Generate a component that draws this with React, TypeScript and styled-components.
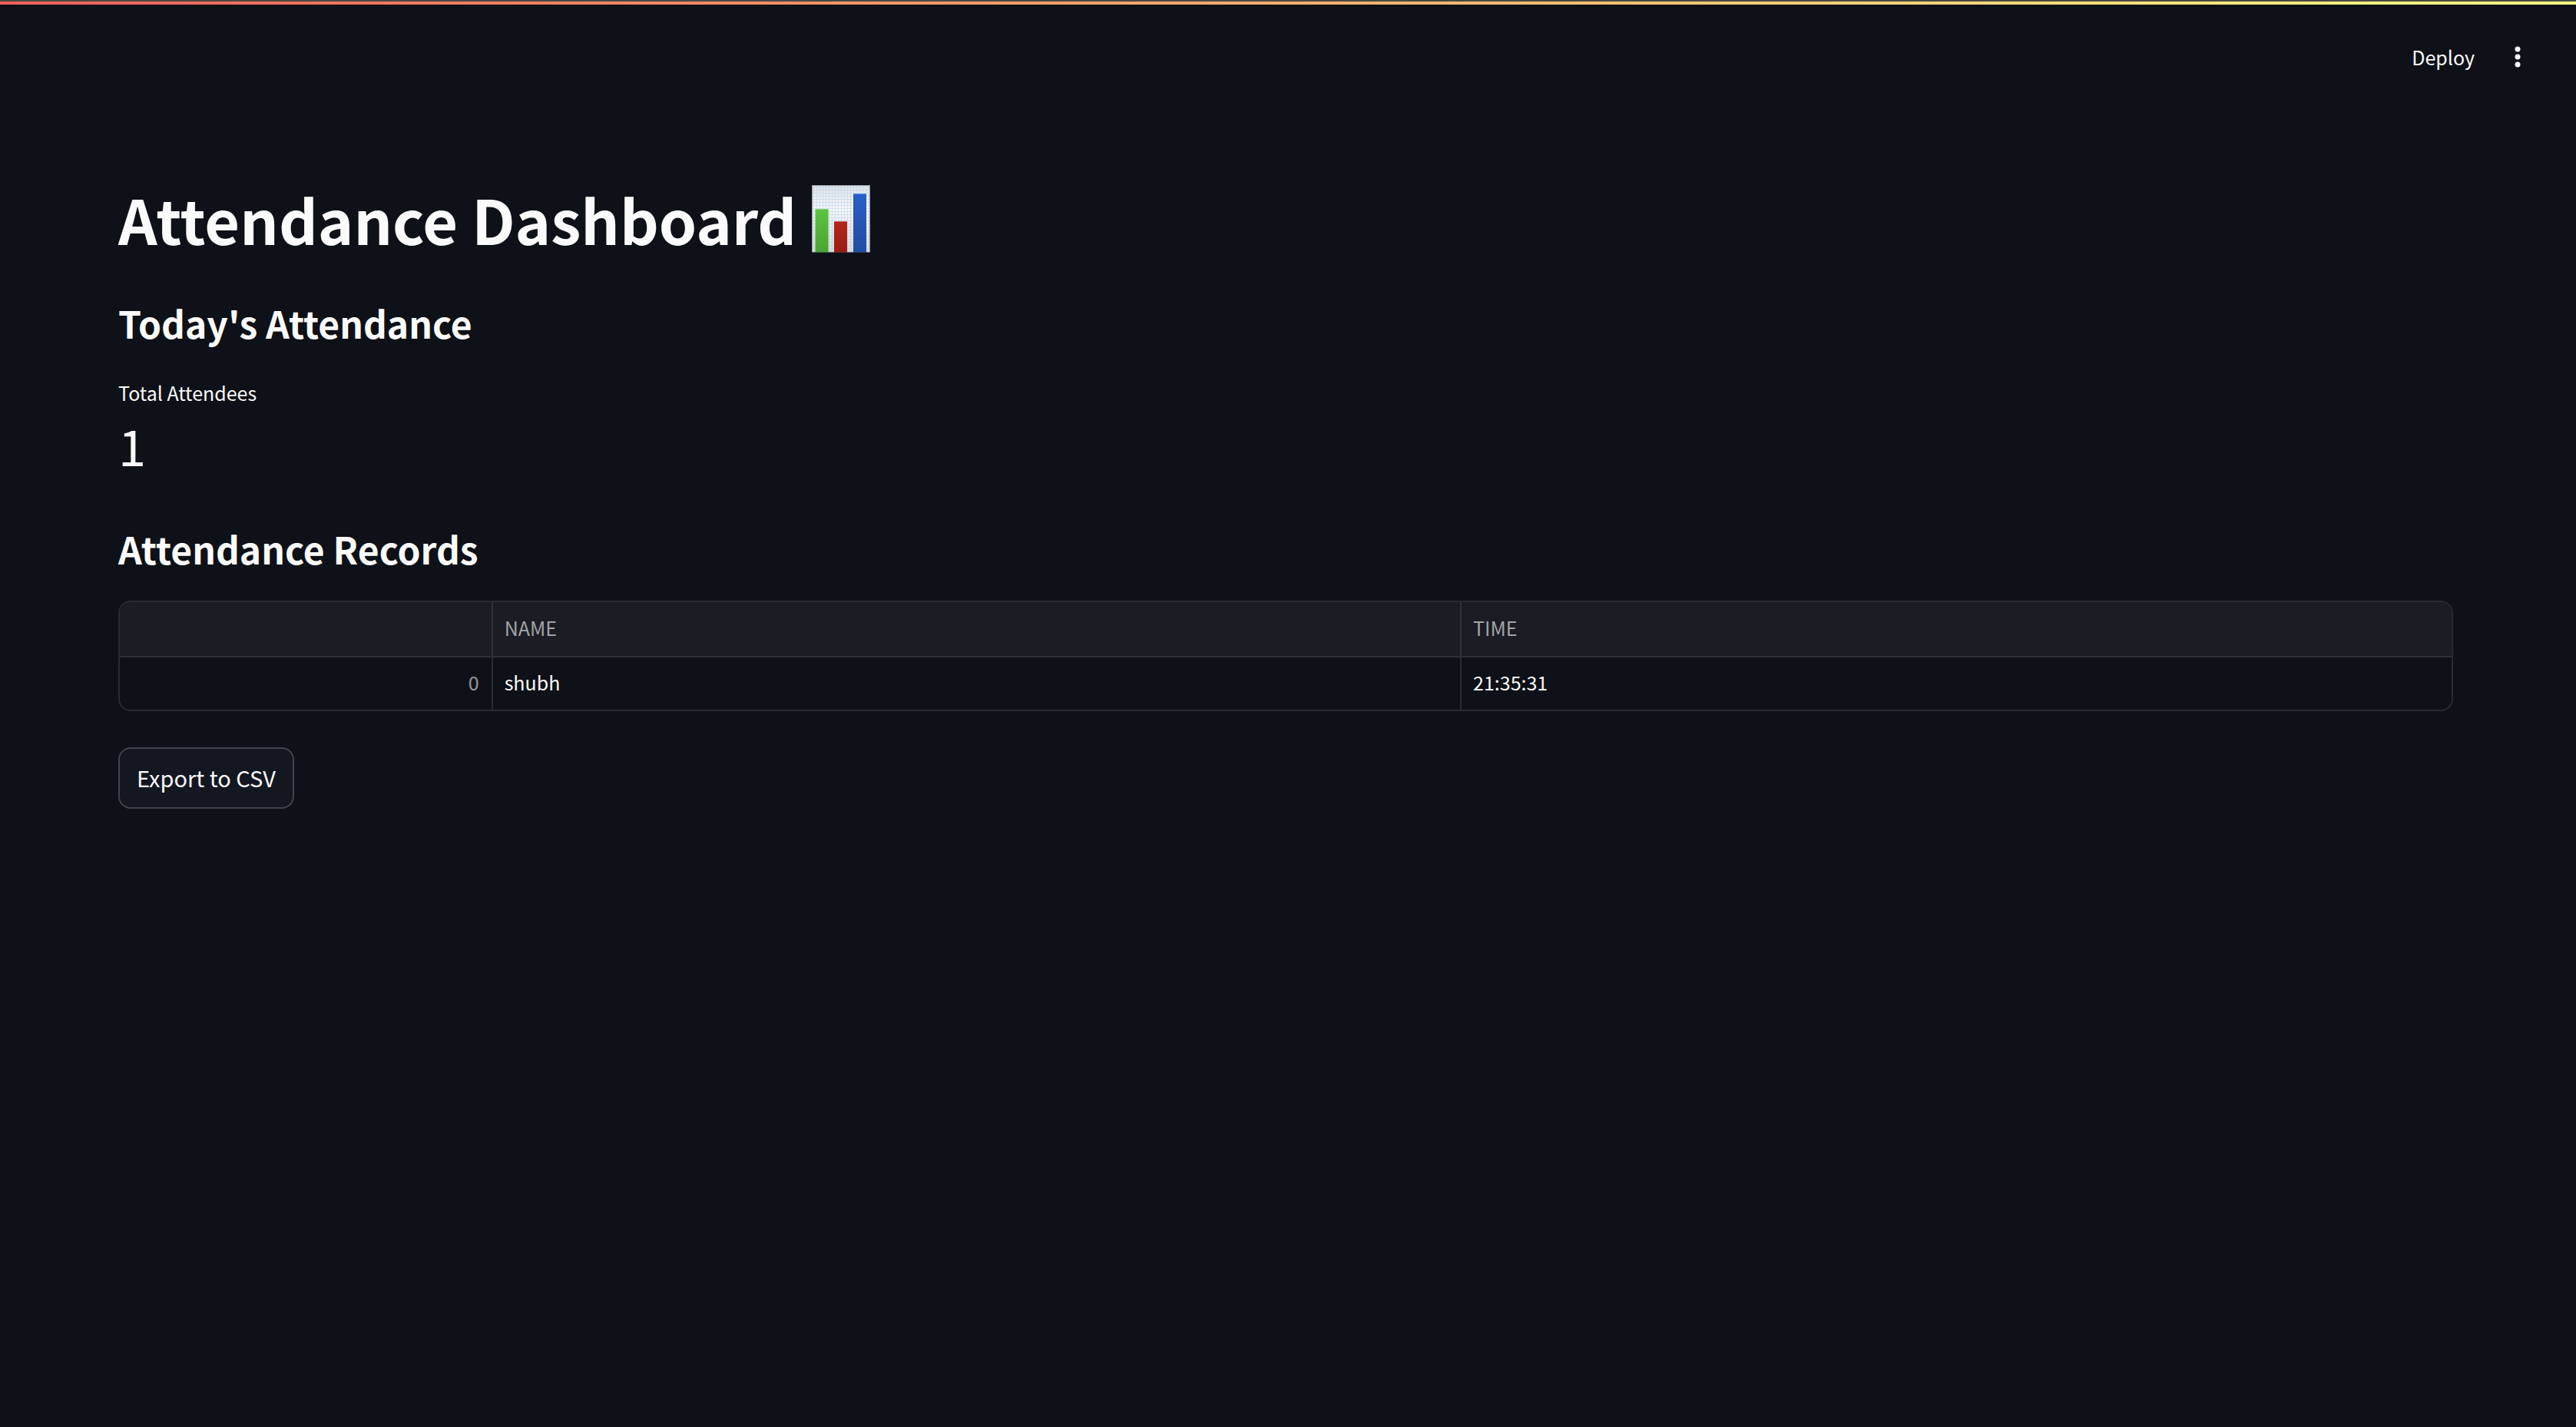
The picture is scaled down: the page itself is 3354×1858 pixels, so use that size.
import React from "react";
import styled, { createGlobalStyle } from "styled-components";

const GlobalStyle = createGlobalStyle`
  *, *::before, *::after { box-sizing: border-box; }
  body {
    margin: 0;
    background: #0e1117;
    color: #fafafa;
    font-family: "Noto Sans CJK SC", "Noto Sans", sans-serif;
    font-size: 25px;
    line-height: 40px;
  }
`;

const Page = styled.div`
  display: flex;
  flex-direction: column;
  min-height: 100vh;
`;

const Decoration = styled.div`
  height: 6px;
  border-top: 2px solid #4a4a43;
  background: linear-gradient(90deg, #f0605a, #fffd84);
`;

const Toolbar = styled.header`
  display: flex;
  justify-content: flex-end;
  align-items: center;
  gap: 34px;
  height: 136px;
  padding: 0 56px 0 0;
`;

const ToolbarButton = styled.button`
  display: flex;
  align-items: center;
  padding: 0 2px;
  border: 0;
  background: transparent;
  color: inherit;
  font: inherit;
  cursor: pointer;
`;

const Main = styled.main`
  display: flex;
  flex-direction: column;
  align-items: stretch;
  padding: 90px 160px 160px 154px;
`;

const Title = styled.h1`
  display: flex;
  align-items: center;
  gap: 20px;
  margin: 0 0 48px;
  font-size: 79px;
  line-height: 106px;
  font-weight: 700;
`;

const ChartIcon = styled.svg`
  display: block;
  width: 76px;
  height: 88px;
`;

const Subtitle = styled.h2`
  margin: 0;
  font-size: 48px;
  line-height: 68px;
  font-weight: 600;
`;

const Metric = styled.dl`
  margin: 37px 0 53px;
`;

const MetricLabel = styled.dt`
  line-height: 40px;
`;

const MetricValue = styled.dd`
  margin: 0;
  font-size: 65px;
  line-height: 96px;
`;

const TableFrame = styled.div`
  margin: 34px 0 47px;
  border: 2px solid #292b30;
  border-radius: 16px;
  overflow: hidden;
`;

const Table = styled.table`
  width: 100%;
  table-layout: fixed;
  border-collapse: separate;
  border-spacing: 0;
`;

const Col = styled.col<{ $share?: string }>`
  width: ${(p) => p.$share ?? "auto"};
`;

const HeadCell = styled.th`
  height: 72px;
  padding: 0 16px 4px 15px;
  border-bottom: 2px solid #313236;
  background: #1b1c24;
  color: #a3a4a7;
  font-weight: 400;
  text-align: left;

  & + & { border-left: 2px solid #313236; }
`;

const Cell = styled.td<{ $index?: boolean }>`
  height: 68px;
  padding: 0 16px 5px 15px;
  color: ${(p) => (p.$index ? "#96989b" : "inherit")};
  text-align: ${(p) => (p.$index ? "right" : "left")};

  & + & { border-left: 2px solid #292b30; }
`;

const ExportButton = styled.button`
  align-self: flex-start;
  height: 80px;
  padding: 0 22px 3px;
  border: 2px solid #41444c;
  border-radius: 16px;
  background: #131720;
  color: inherit;
  font-family: inherit;
  font-size: 29px;
  line-height: 40px;
  cursor: pointer;
`;

const records = [{ name: "shubh", time: "21:35:31" }];

function BarChart() {
  return (
    <ChartIcon viewBox="0 0 76 88" role="img" aria-label="Bar chart">
      <defs>
        <linearGradient id="paper" x1="0" y1="0" x2="0" y2="1">
          <stop offset="0" stopColor="#e2e3e5" />
          <stop offset="0.35" stopColor="#f8f7f6" />
          <stop offset="1" stopColor="#dcdcdc" />
        </linearGradient>
        <linearGradient id="green" x1="0" y1="0" x2="0" y2="1">
          <stop offset="0" stopColor="#5bc440" />
          <stop offset="1" stopColor="#4ba333" />
        </linearGradient>
        <linearGradient id="red" x1="0" y1="0" x2="0" y2="1">
          <stop offset="0" stopColor="#b3261b" />
          <stop offset="1" stopColor="#981d13" />
        </linearGradient>
        <linearGradient id="blue" x1="0" y1="0" x2="0" y2="1">
          <stop offset="0" stopColor="#285fc8" />
          <stop offset="1" stopColor="#224da0" />
        </linearGradient>
        <pattern id="grid" width="4" height="4" patternUnits="userSpaceOnUse">
          <path d="M0 2.500h4M2.500 0v4" stroke="#a9cdef" strokeWidth="1" opacity="0.5" />
        </pattern>
      </defs>
      <rect width="76" height="88" fill="url(#paper)" />
      <rect width="76" height="88" fill="url(#grid)" />
      <rect x="0.5" y="0.5" width="75" height="87" fill="none" stroke="#9a9b9e" />
      <rect x="4.500" y="31" width="17" height="57" fill="url(#green)" />
      <rect x="29" y="47" width="17" height="41" fill="url(#red)" />
      <rect x="54" y="11" width="17" height="77" fill="url(#blue)" />
      <path d="M4.500 31.500h17M29 47.500h17M54 11.500h17" stroke="#fff" opacity="0.3" />
      <path d="M0 87.500h76" stroke="#333" opacity="0.5" />
    </ChartIcon>
  );
}

export default function App() {
  return (
    <Page>
      <GlobalStyle />
      <Decoration />
      <Toolbar>
        <ToolbarButton type="button">Deploy</ToolbarButton>
        <ToolbarButton type="button" aria-label="Main menu">
          <svg width="36" height="32" viewBox="0 0 36 32" fill="currentColor" aria-hidden="true">
            <circle cx="18" cy="6" r="3.500" />
            <circle cx="18" cy="16" r="3.500" />
            <circle cx="18" cy="26" r="3.500" />
          </svg>
        </ToolbarButton>
      </Toolbar>
      <Main>
        <Title>
          Attendance Dashboard
          <BarChart />
        </Title>
        <Subtitle>Today's Attendance</Subtitle>
        <Metric>
          <MetricLabel>Total Attendees</MetricLabel>
          <MetricValue>1</MetricValue>
        </Metric>
        <Subtitle>Attendance Records</Subtitle>
        <TableFrame>
          <Table>
            <colgroup>
              <Col $share="15.93%" />
              <Col $share="41.55%" />
              <Col />
            </colgroup>
            <thead>
              <tr>
                <HeadCell scope="col" aria-label="Index" />
                <HeadCell scope="col">NAME</HeadCell>
                <HeadCell scope="col">TIME</HeadCell>
              </tr>
            </thead>
            <tbody>
              {records.map((record, i) => (
                <tr key={record.name}>
                  <Cell $index>{i}</Cell>
                  <Cell>{record.name}</Cell>
                  <Cell>{record.time}</Cell>
                </tr>
              ))}
            </tbody>
          </Table>
        </TableFrame>
        <ExportButton type="button">Export to CSV</ExportButton>
      </Main>
    </Page>
  );
}
